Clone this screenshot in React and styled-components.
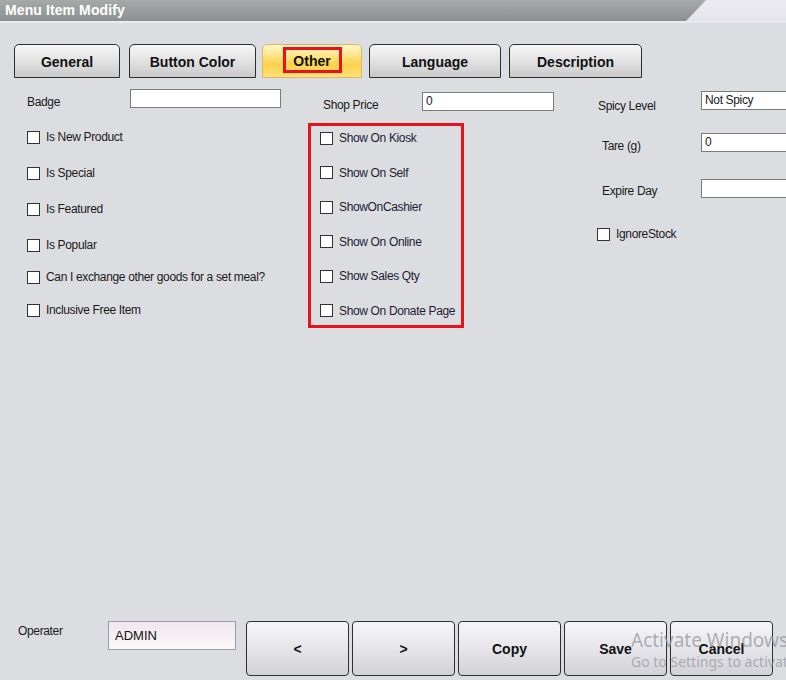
import React from 'react';
import styled, { createGlobalStyle } from 'styled-components';

const GlobalStyle = createGlobalStyle`
  html, body {
    margin: 0;
    padding: 0;
    background: #dcdde1;
  }
  * {
    box-sizing: border-box;
  }
`;

const Window = styled.div`
  position: relative;
  width: 786px;
  height: 680px;
  overflow: hidden;
  background: #dcdde1;
  font-family: 'Liberation Sans', Arial, sans-serif;
  color: #1a1a1a;
`;

const TitleBar = styled.div`
  height: 21px;
  background: linear-gradient(#ecebf1, #e4e4ea);
`;

const TitleStrip = styled.div`
  width: 706px;
  height: 21px;
  padding: 2px 0 0 5px;
  background: linear-gradient(#a6aaa9 0%, #969a9a 60%, #8c9090 100%);
  clip-path: polygon(0 0, 100% 0, calc(100% - 20px) 100%, 0 100%);
  color: #ffffff;
  font-weight: bold;
  font-size: 14px;
  letter-spacing: 0.1px;
`;

const Body = styled.div`
  display: flex;
  flex-direction: column;
  height: 659px;
  border-top: 2px solid #ebebef;
`;

const TabRow = styled.div`
  display: flex;
  padding: 21px 0 0 14px;
`;

const Tab = styled.div`
  display: flex;
  align-items: center;
  justify-content: center;
  width: ${(props) => props.$w}px;
  height: 34px;
  margin-right: ${(props) => props.$gap || 0}px;
  padding-top: 1px;
  border: 1px solid ${(props) => (props.$active ? '#d8b866' : '#2e2e2e')};
  border-radius: 5px 5px 0 0;
  background: ${(props) =>
    props.$active
      ? 'linear-gradient(#fff6c4 0%, #ffe486 35%, #fcd24a 60%, #ffe07a 100%)'
      : 'linear-gradient(#f6f6f6 0%, #e2e2e2 50%, #c9c9c9 100%)'};
  font-weight: bold;
  font-size: 14px;
  color: #111;
`;

const Highlight = styled.div`
  display: flex;
  align-items: center;
  justify-content: center;
  width: 59px;
  height: 26px;
  margin-top: -4px;
  padding-top: 2px;
  border: 3px solid #e8121e;
`;

const Form = styled.div`
  display: flex;
  align-items: flex-start;
  font-size: 12px;
  letter-spacing: -0.35px;
`;

const Column = styled.div`
  display: flex;
  flex-direction: column;
  width: ${(props) => (props.$w ? `${props.$w}px` : 'auto')};
  flex: ${(props) => (props.$w ? 'none' : '1')};
  padding-left: ${(props) => props.$pl || 0}px;
`;

const FieldRow = styled.div`
  display: flex;
  align-items: flex-start;
  height: 19px;
  margin-top: ${(props) => props.$mt || 0}px;
  padding-left: ${(props) => props.$pl || 0}px;
`;

const Label = styled.div`
  width: ${(props) => props.$w}px;
  flex: none;
  line-height: 14px;
  padding-top: ${(props) => props.$pt || 0}px;
  padding-left: ${(props) => props.$pl || 0}px;
  white-space: nowrap;
`;

const TextBox = styled.div`
  flex: none;
  width: ${(props) => props.$w}px;
  height: 19px;
  padding: 1px 0 0 3px;
  background: #ffffff;
  border: 1px solid #7b7b7b;
  font-size: 12px;
  line-height: 15px;
  white-space: nowrap;
`;

const CheckRow = styled.div`
  display: flex;
  align-items: center;
  height: 16px;
  margin-top: ${(props) => props.$mt || 0}px;
  white-space: nowrap;
`;

const Box = styled.span`
  width: 13px;
  height: 13px;
  flex: none;
  margin-right: 6px;
  background: #ffffff;
  border: 1px solid #333333;
`;

const HighlightGroup = styled.div`
  display: flex;
  flex-direction: column;
  gap: 18.6px;
  width: 156px;
  height: 205px;
  margin-top: 12px;
  padding: 4px 0 0 9px;
  border: 3px solid #e8121e;
  color: #1c1c34;
`;

const Footer = styled.div`
  display: flex;
  align-items: flex-start;
  margin-top: auto;
  padding: 0 0 4px 18px;
`;

const OperatorLabel = styled.div`
  width: 90px;
  padding-top: 3px;
  font-size: 12px;
  letter-spacing: -0.35px;
  line-height: 14px;
`;

const OperatorBox = styled.div`
  width: 128px;
  height: 29px;
  margin-right: 10px;
  padding: 6px 0 0 6px;
  border: 1px solid #9b9aa8;
  background: linear-gradient(#efe6f0, #fcf8f6);
  font-size: 13px;
  color: #111;
`;

const ButtonGroup = styled.div`
  display: flex;
  gap: 3px;
`;

const ActionButton = styled.div`
  display: flex;
  align-items: center;
  justify-content: center;
  width: 103px;
  height: 55px;
  padding-top: 1px;
  border: 1px solid #2f2f2f;
  border-radius: 4px;
  background: linear-gradient(#f6f6f8 0%, #e6e6ea 50%, #d2d2d6 100%);
  font-weight: bold;
  font-size: 14px;
  color: #111;
`;

const Watermark = styled.div`
  position: absolute;
  left: 631px;
  top: 628px;
  font-family: 'Noto Sans', 'Open Sans', sans-serif;
  color: rgba(150, 150, 158, 0.75);
  white-space: nowrap;
  pointer-events: none;
`;

const WatermarkTitle = styled.div`
  font-size: 19px;
  line-height: 24px;
`;

const WatermarkSub = styled.div`
  font-size: 14px;
  line-height: 20px;
`;

const Check = ({ children, mt }) => (
  <CheckRow $mt={mt}>
    <Box />
    {children}
  </CheckRow>
);

const tabs = [
  { name: 'General', w: 106, gap: 9 },
  { name: 'Button Color', w: 127, gap: 6 },
  { name: 'Other', w: 100, gap: 7, active: true },
  { name: 'Language', w: 132, gap: 8 },
  { name: 'Description', w: 133 },
];

const kioskOptions = [
  'Show On Kiosk',
  'Show On Self',
  'ShowOnCashier',
  'Show On Online',
  'Show Sales Qty',
  'Show On Donate Page',
];

const App = () => (
  <Window>
    <GlobalStyle />
    <TitleBar>
      <TitleStrip>Menu Item Modify</TitleStrip>
    </TitleBar>
    <Body>
      <TabRow>
        {tabs.map((t) => (
          <Tab key={t.name} $w={t.w} $gap={t.gap} $active={t.active}>
            {t.active ? <Highlight>{t.name}</Highlight> : t.name}
          </Tab>
        ))}
      </TabRow>

      <Form>
        <Column $w={308} $pl={27}>
          <FieldRow $mt={11}>
            <Label $w={103} $pt={6}>Badge</Label>
            <TextBox $w={151} />
          </FieldRow>
          <Check mt={21}>Is New Product</Check>
          <Check mt={20}>Is Special</Check>
          <Check mt={20}>Is Featured</Check>
          <Check mt={20}>Is Popular</Check>
          <Check mt={16}>Can I exchange other goods for a set meal?</Check>
          <Check mt={17}>Inclusive Free Item</Check>
        </Column>

        <Column $w={289}>
          <FieldRow $mt={14} $pl={15}>
            <Label $w={99} $pt={6}>Shop Price</Label>
            <TextBox $w={132}>0</TextBox>
          </FieldRow>
          <HighlightGroup>
            {kioskOptions.map((o) => (
              <Check key={o}>{o}</Check>
            ))}
          </HighlightGroup>
        </Column>

        <Column>
          <FieldRow $mt={13}>
            <Label $w={104} $pt={8} $pl={1}>Spicy Level</Label>
            <TextBox $w={100}>Not Spicy</TextBox>
          </FieldRow>
          <FieldRow $mt={23}>
            <Label $w={104} $pt={6} $pl={5}>Tare (g)</Label>
            <TextBox $w={100}>0</TextBox>
          </FieldRow>
          <FieldRow $mt={27}>
            <Label $w={104} $pt={5} $pl={5}>Expire Day</Label>
            <TextBox $w={100} />
          </FieldRow>
          <Check mt={28}>IgnoreStock</Check>
        </Column>
      </Form>

      <Footer>
        <OperatorLabel>Operater</OperatorLabel>
        <OperatorBox>ADMIN</OperatorBox>
        <ButtonGroup>
          <ActionButton>&lt;</ActionButton>
          <ActionButton>&gt;</ActionButton>
          <ActionButton>Copy</ActionButton>
          <ActionButton>Save</ActionButton>
          <ActionButton>Cancel</ActionButton>
        </ButtonGroup>
      </Footer>
    </Body>
    <Watermark>
      <WatermarkTitle>Activate Windows</WatermarkTitle>
      <WatermarkSub>Go to Settings to activate Windows.</WatermarkSub>
    </Watermark>
  </Window>
);

export default App;
